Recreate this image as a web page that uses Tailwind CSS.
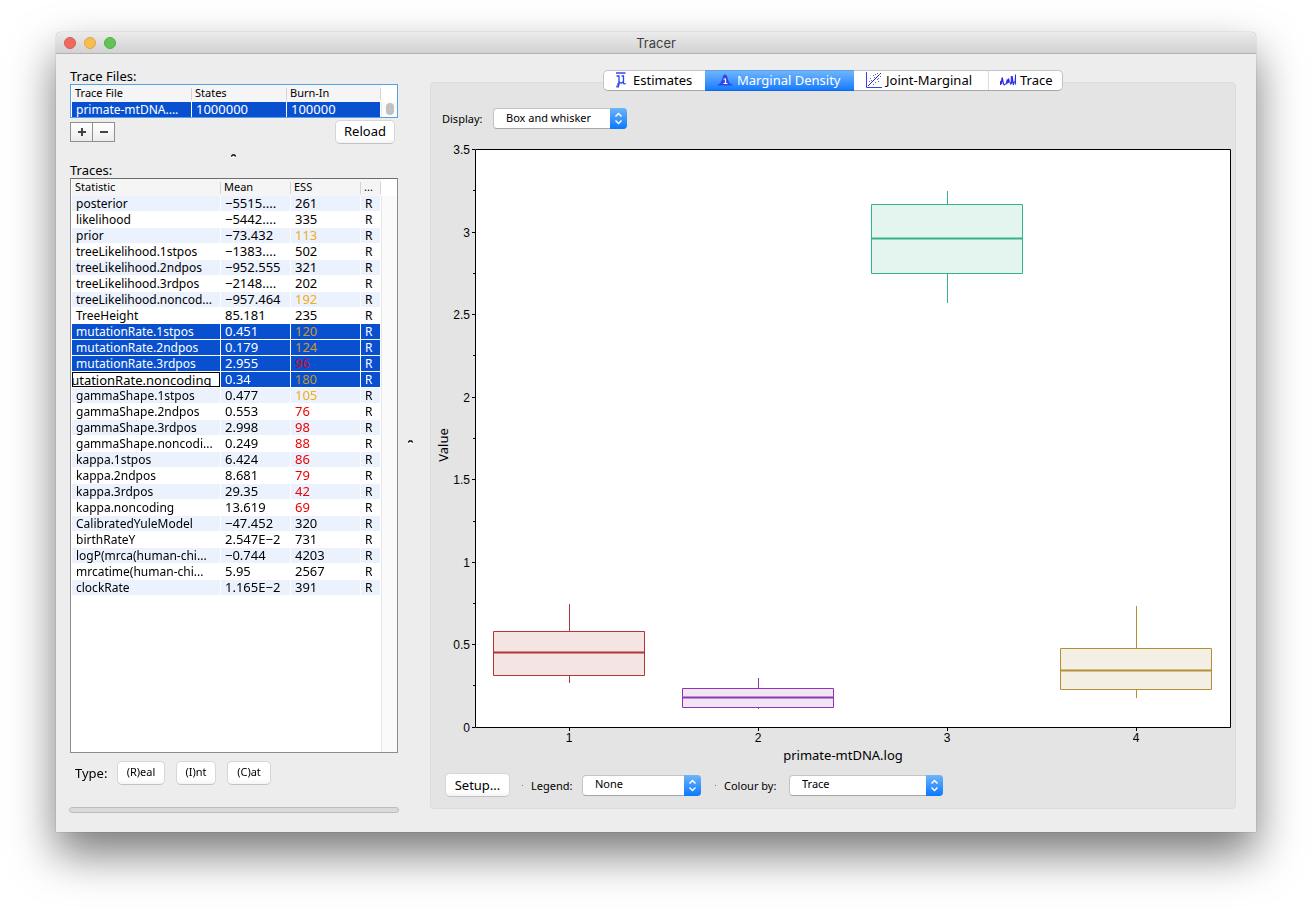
<!DOCTYPE html>
<html lang="en">
<head>
<meta charset="utf-8">
<meta name="viewport" content="width=device-width, initial-scale=1">
<title>Tracer</title>
<script src="https://cdn.jsdelivr.net/npm/@tailwindcss/browser@4"></script>
</head>
<body class="bg-white text-black font-['Lucida_Grande','Noto_Sans',sans-serif] text-[13px] leading-4">
<div class="min-h-screen flex flex-col px-14 pt-8 pb-20">
  <main class="flex-1 flex flex-col bg-[#ededed] rounded-t-[5px] shadow-[0_0_1px_rgba(0,0,0,0.5),0_22px_45px_rgba(0,0,0,0.53)]">
    <header class="relative h-[22px] shrink-0 flex items-center rounded-t-[5px] bg-linear-to-b from-[#ebebeb] to-[#d2d2d2] border-b border-[#b2b2b2] px-2 gap-2">
      <button aria-label="Close" class="size-3 rounded-full bg-[#ee6a5f] border border-[#d85a50]"></button>
      <button aria-label="Minimize" class="size-3 rounded-full bg-[#f6be50] border border-[#dfa544]"></button>
      <button aria-label="Zoom" class="size-3 rounded-full bg-[#61c454] border border-[#52ad46]"></button>
      <h1 class="absolute inset-x-0 text-center text-[#404040] font-['Inter',sans-serif] pointer-events-none">Tracer</h1>
    </header>

    <div class="flex-1 flex pl-3.5 pr-5">
      <!-- Left column: files and traces -->
      <section class="w-[328px] shrink-0 flex flex-col pt-3.5 pb-[19px]">
        <h2 class="h-4">Trace Files:</h2>
        <div class="h-[34px] flex pl-px bg-white border border-[#56a3e4] overflow-hidden">
          <table class="w-[309px] table-fixed border-separate border-spacing-0">
            <colgroup><col class="w-[120px]"><col class="w-[95px]"><col class="w-[94px]"></colgroup>
            <thead class="text-[11px] bg-[#f5f5f5]">
              <tr class="h-[17px]">
                <th class="p-0 text-left font-normal"><span class="block h-3 leading-[10px] pl-[3px] border-r border-[#d4d4d4]">Trace File</span></th>
                <th class="p-0 text-left font-normal"><span class="block h-3 leading-[10px] pl-[3px] border-r border-[#d4d4d4]">States</span></th>
                <th class="p-0 text-left font-normal"><span class="block h-3 leading-[10px] pl-[3px] border-r border-[#d4d4d4]">Burn-In</span></th>
              </tr>
            </thead>
            <tbody class="text-[12px] bg-[#0850d0] text-white">
              <tr class="h-4">
                <td class="p-0 pl-1 border-r border-b border-white leading-[15px] whitespace-nowrap">primate-mtDNA....</td>
                <td class="p-0 pl-1 border-r border-b border-white leading-[15px] text-[13px]">1000000</td>
                <td class="p-0 pl-1 border-r border-b border-white leading-[15px] text-[13px]">100000</td>
              </tr>
            </tbody>
          </table>
          <div class="w-4 pt-[17px]"><div class="h-4 bg-[#fafafa] border-l border-[#e8e8e8] flex justify-center pt-px"><div class="w-2 h-3 rounded-full bg-[#c1c1c1]"></div></div></div>
        </div>
        <div class="mt-0.5 h-6 flex items-center justify-between pr-[3px]">
          <div class="flex">
            <button aria-label="Add trace file" class="w-[23px] h-5 border border-[#8f8f8f] bg-linear-to-b from-white to-[#ececec] flex items-center justify-center"><svg class="size-2" viewBox="0 0 8 8" stroke="#444" stroke-width="2"><path d="M4 0v8M0 4h8"/></svg></button>
            <button aria-label="Remove trace file" class="w-[23px] -ml-px h-5 border border-[#8f8f8f] bg-linear-to-b from-white to-[#ececec] flex items-center justify-center"><svg class="size-2" viewBox="0 0 8 8" stroke="#444" stroke-width="2"><path d="M0 4h8"/></svg></button>
          </div>
          <button class="w-[60px] h-6 pb-0.5 rounded-[5px] border border-[#d6d6d6] border-b-[#c2c2c2] bg-linear-to-b from-white from-75% to-[#f5f5f5]">Reload</button>
        </div>
        <div class="h-[18px] flex items-center justify-center pt-[5px] pr-0.5"><svg class="w-[5px] h-1" viewBox="0 0 5 4" fill="none"><path d="M0 4h5V2H0z" fill="#fff"/><path d="M.3 2.500L1.500 1h2l1.200 1.500" stroke="#111" stroke-width="1.400"/></svg></div>
        <h2 class="h-4">Traces:</h2>
        <div class="flex-1 flex pl-px bg-white border border-[#8c8c8c] border-t-[#6e6e6e]">
          <div class="w-[309px]">
            <table class="w-full table-fixed border-separate border-spacing-0">
              <colgroup><col class="w-[149px]"><col class="w-[70px]"><col class="w-[70px]"><col class="w-[20px]"></colgroup>
              <thead class="text-[11px] bg-[#f5f5f5]">
                <tr class="h-[17px]">
                  <th class="p-0 text-left font-normal"><span class="block h-3 leading-[10px] pl-[3px] border-r border-[#d4d4d4]">Statistic</span></th>
                  <th class="p-0 text-left font-normal"><span class="block h-3 leading-[10px] pl-[3px] border-r border-[#d4d4d4]">Mean</span></th>
                  <th class="p-0 text-left font-normal"><span class="block h-3 leading-[10px] pl-[3px] border-r border-[#d4d4d4]">ESS</span></th>
                  <th class="p-0 text-left font-normal"><span class="block h-3 leading-[10px] pl-[3px] border-r border-[#d4d4d4]">...</span></th>
                </tr>
              </thead>
              <tbody id="traces" class="text-[12px]"></tbody>
            </table>
          </div>
          <div class="w-4 mt-[17px] bg-[#fafafa] border-l border-[#e6e6e6]"></div>
        </div>
        <div class="mt-2 h-6 flex items-center text-[11px]">
          <span class="w-[47px] pl-[5px] text-[13px]">Type:</span>
          <button class="w-12 h-6 pb-0.5 mr-[11px] rounded-[5px] border border-[#d6d6d6] border-b-[#c2c2c2] bg-linear-to-b from-white from-75% to-[#f5f5f5]">(R)eal</button>
          <button class="w-10 h-6 pb-0.5 mr-[11px] rounded-[5px] border border-[#d6d6d6] border-b-[#c2c2c2] bg-linear-to-b from-white from-75% to-[#f5f5f5]">(I)nt</button>
          <button class="w-11 h-6 pb-0.5 rounded-[5px] border border-[#d6d6d6] border-b-[#c2c2c2] bg-linear-to-b from-white from-75% to-[#f5f5f5]">(C)at</button>
        </div>
        <div role="progressbar" aria-label="Progress" class="mt-[22px] -mx-px h-1.5 rounded-full bg-[#dadada] border border-[#bcbcbc]"></div>
      </section>

      <div class="w-8 shrink-0 flex items-center pl-2.5 pb-0.5"><svg class="w-[5px] h-1" viewBox="0 0 5 4" fill="none"><path d="M0 4h5V2H0z" fill="#fff"/><path d="M.3 2.500L1.500 1h2l1.200 1.500" stroke="#111" stroke-width="1.400"/></svg></div>

      <!-- Right column: tabbed analysis panel -->
      <section class="flex-1 min-w-0 flex flex-col pt-4 pb-[23px]">
        <div role="tablist" class="relative z-10 self-center h-[21px] flex rounded-[5px] bg-white border border-[#c4c4c4] border-b-[#a6a6a6]">
          <button role="tab" class="w-[101px] pl-[11px] flex items-center gap-1.5 pb-0.5">
            <svg class="w-3 h-4" viewBox="0 0 12 16" fill="none" stroke="#2f45ee"><path d="M1 1h9.500" stroke-width="1.500"/><path d="M1.500 4H4v9.500M2 13.500v2" stroke-width="1.300"/><path d="M3.200 11v4.500" stroke-width="1.600"/><path d="M4 9.500c.6 2 3.600 2 4.200 0M6.500 4h2v7c0 1 1 1.200 2.300.5" stroke-width="1.300"/></svg>Estimates</button>
          <button role="tab" aria-selected="true" class="w-[149px] pl-3 -my-px flex items-center gap-1 bg-linear-to-b from-[#6db4fa] to-[#0f7bff] text-white border-y border-t-[#5a9fe5] border-b-[#1565e0] pb-0.5">
            <svg class="w-4 h-3" viewBox="0 0 16 12"><path d="M0 11.500V11c3-.6 4.400-3 5.300-6.500C6 1.500 6.800.5 8 .5s2 1 2.700 4C11.600 8 13 10.400 16 11v.500z" fill="#2f45ee"/><path d="M6.500 5h2v4.500M6.500 9.500h4" stroke="#fff" stroke-width="1.200" fill="none"/></svg>Marginal Density</button>
          <button role="tab" class="w-[134px] pl-3 flex items-center gap-1 pb-0.5">
            <svg class="size-4" viewBox="0 0 16 16" fill="none" stroke="#2f45ee"><path d="M.5 0v15.500H16"/><path d="M2 14L15 1" stroke="#2222c8"/><g fill="#5560ee" stroke="none"><path d="M4 6h1v1H4zM7 3h1v1H7zM5 8h1v1H5zM9 2h1v1H9zM11 1h1v1h-1zM8 5h1v1H8zM3 9h1v1H3zM12 6h1v1h-1zM14 4h1v1h-1zM9 10h1v1H9zM7 12h1v1H7zM12 9h1v1h-1zM11 7h1v1h-1zM13 2h1v1h-1z"/></g></svg>Joint-Marginal</button>
          <button role="tab" class="w-[74px] pl-[11px] border-l border-[#dcdcdc] flex items-center gap-1 pb-0.5">
            <svg class="w-4 h-3" viewBox="0 0 16 12" fill="none" stroke="#2a2ae6" stroke-width="1.100"><path d="M.6 11V7l1 3 .6-6.500.6 2.500.8 4 .8 1 .9-1 .9 0 .8-3.500.7 2 .8-4 .8 3 .8 1 .6 1.500 1-1 .5-7 .6 5 .5 4 .9-3 .9 0 .5-7.500v10"/><path d="M2 7.500v-3M8.300 9V5M11.300 9V2" /></svg>Trace</button>
        </div>

        <div role="tabpanel" class="flex-1 -mt-[9px] flex flex-col rounded-[4px] bg-[#e4e4e4] border border-[#dcdcdc] text-[11px]">
          <div class="pt-[25px] pl-[11px] flex items-center">
            <label for="display" class="w-[51px]">Display:</label>
            <div class="relative">
              <select id="display" class="block appearance-none w-[134px] h-[21px] pl-3 pb-0.5 rounded-[4px] bg-white border border-[#c4c4c4] border-b-[#a6a6a6]"><option>Box and whisker</option></select>
              <svg class="absolute right-0 top-0 pointer-events-none w-[17px] h-[21px]" viewBox="0 0 17 21"><defs><linearGradient id="blue" x2="0" y2="1"><stop stop-color="#6db4fa"/><stop offset="1" stop-color="#0a78ff"/></linearGradient></defs><path d="M0 0h13a4 4 0 014 4v13a4 4 0 01-4 4H0z" fill="url(#blue)"/><path d="M5.500 8.500l3-3 3 3M5.500 12.500l3 3 3-3" fill="none" stroke="#fff" stroke-width="1.500"/></svg>
            </div>
          </div>

          <svg class="mt-[11px] -mx-px block" viewBox="0 0 806 626" role="img" aria-label="Box and whisker plot of mutation rates">
            <path d="M45.500 9.500h755v578h-755z" fill="#fff" stroke="#000"/>
            <path d="M42 9.500h3M42 92.500h3M42 174.500h3M42 257.500h3M42 339.500h3M42 422.500h3M42 504.500h3M42 587.500h3M43 50.500h2M43 133.500h2M43 215.500h2M43 298.500h2M43 381.500h2M43 463.500h2M43 545.500h2M139.500 588v3M328.500 588v3M517.500 588v3M706.500 588v3" stroke="#000"/>
            <g class="font-['Liberation_Sans',sans-serif] text-[12px]" text-anchor="end">
              <text x="40" y="14">3.5</text><text x="40" y="97">3</text><text x="40" y="179">2.5</text><text x="40" y="262">2</text><text x="40" y="344">1.5</text><text x="40" y="427">1</text><text x="40" y="509">0.5</text><text x="40" y="592">0</text>
            </g>
            <g class="font-['Liberation_Sans',sans-serif] text-[12px]" text-anchor="middle">
              <text x="139" y="602">1</text><text x="328" y="602">2</text><text x="517" y="602">3</text><text x="706" y="602">4</text>
            </g>
            <g class="text-[13px]" text-anchor="middle">
              <text x="413" y="620">primate-mtDNA.log</text>
              <text transform="translate(18 305) rotate(-90)">Value</text>
            </g>
            <g stroke="#b23636"><path d="M139.500 464v79"/><path d="M63.500 491.500h151v44h-151z" fill="#f4e5e4"/><path d="M64 512.500h150" stroke-width="3" stroke-opacity=".5"/><path d="M64 512.500h150"/></g>
            <g stroke="#8f35b3"><path d="M328.500 538v31"/><path d="M252.500 548.500h151v19h-151z" fill="#f0e4f5"/><path d="M253 557.500h150" stroke-width="3" stroke-opacity=".5"/><path d="M253 557.500h150"/></g>
            <g stroke="#35b388"><path d="M517.500 51v112"/><path d="M441.500 64.500h151v69h-151z" fill="#e4f4ee"/><path d="M442 98.500h150" stroke-width="3" stroke-opacity=".5"/><path d="M442 98.500h150"/></g>
            <g stroke="#b38f35"><path d="M706.500 466v92"/><path d="M630.500 508.500h151v41h-151z" fill="#f4efe4"/><path d="M631 530.500h150" stroke-width="3" stroke-opacity=".5"/><path d="M631 530.500h150"/></g>
          </svg>

          <div class="mt-[7px] pl-3.5 flex items-center">
            <button class="w-[65px] h-6 rounded-[5px] border border-[#d6d6d6] border-b-[#c2c2c2] bg-linear-to-b from-white from-75% to-[#f5f5f5] text-[13px]">Setup...</button>
            <span class="ml-3 mr-2 size-px bg-[#777]"></span>
            <label for="legend" class="w-[51px] pt-0.5">Legend:</label>
            <div class="relative">
              <select id="legend" class="block appearance-none w-[119px] h-[21px] pl-3 pb-0.5 rounded-[4px] bg-white border border-[#c4c4c4] border-b-[#a6a6a6]"><option>None</option></select>
              <svg class="absolute right-0 top-0 pointer-events-none w-[17px] h-[21px]" viewBox="0 0 17 21"><path d="M0 0h13a4 4 0 014 4v13a4 4 0 01-4 4H0z" fill="url(#blue)"/><path d="M5.500 8.500l3-3 3 3M5.500 12.500l3 3 3-3" fill="none" stroke="#fff" stroke-width="1.500"/></svg>
            </div>
            <span class="ml-3.5 mr-2 size-px bg-[#777]"></span>
            <label for="colour" class="w-[65px] pt-0.5">Colour by:</label>
            <div class="relative">
              <select id="colour" class="block appearance-none w-[154px] h-[21px] pl-3 pb-0.5 rounded-[4px] bg-white border border-[#c4c4c4] border-b-[#a6a6a6]"><option>Trace</option></select>
              <svg class="absolute right-0 top-0 pointer-events-none w-[17px] h-[21px]" viewBox="0 0 17 21"><path d="M0 0h13a4 4 0 014 4v13a4 4 0 01-4 4H0z" fill="url(#blue)"/><path d="M5.500 8.500l3-3 3 3M5.500 12.500l3 3 3-3" fill="none" stroke="#fff" stroke-width="1.500"/></svg>
            </div>
          </div>
        </div>
      </section>
    </div>
  </main>
</div>
<script>
const rows = [
  ['posterior','−5515....','261'],['likelihood','−5442....','335'],['prior','−73.432','113'],
  ['treeLikelihood.1stpos','−1383....','502'],['treeLikelihood.2ndpos','−952.555','321'],['treeLikelihood.3rdpos','−2148....','202'],
  ['treeLikelihood.noncod...','−957.464','192'],['TreeHeight','85.181','235'],['mutationRate.1stpos','0.451','120'],
  ['mutationRate.2ndpos','0.179','124'],['mutationRate.3rdpos','2.955','96'],['mutationRate.noncoding','0.34','180'],
  ['gammaShape.1stpos','0.477','105'],['gammaShape.2ndpos','0.553','76'],['gammaShape.3rdpos','2.998','98'],
  ['gammaShape.noncodi...','0.249','88'],['kappa.1stpos','6.424','86'],['kappa.2ndpos','8.681','79'],
  ['kappa.3rdpos','29.35','42'],['kappa.noncoding','13.619','69'],['CalibratedYuleModel','−47.452','320'],
  ['birthRateY','2.547E−2','731'],['logP(mrca(human-chi...','−0.744','4203'],['mrcatime(human-chi...','5.95','2567'],['clockRate','1.165E−2','391']
];
const cell = 'p-0 pl-1 border-r border-b border-white leading-[15px] whitespace-nowrap';
document.getElementById('traces').innerHTML = rows.map(([name, mean, ess], i) => {
  const selected = i >= 8 && i <= 11;
  const row = selected ? 'h-4 bg-[#0850d0] text-white' : i % 2 ? 'h-4 bg-white' : 'h-4 bg-[#ebf2fe]';
  const tone = +ess < 100 ? (selected ? 'text-[#d00a20]' : 'text-[#f00000]') : +ess < 200 ? (selected ? 'text-[#c89a30]' : 'text-[#f2ac14]') : '';
  const first = i === 11
    ? `<td class="p-0 border-r border-b border-white"><input id="editor" aria-label="Statistic name" value="${name}" class="block w-full h-[15px] pr-2 bg-white text-black text-[13px] leading-[13px] border border-black outline-none caret-transparent"></td>`
    : `<td class="${cell}">${name}</td>`;
  return `<tr class="${row}">${first}<td class="${cell} text-[13px]">${mean}</td><td class="${cell} text-[13px] ${tone}">${ess}</td><td class="${cell}">R</td></tr>`;
}).join('');
// The cell being edited shows the end of its text.
const editor = document.getElementById('editor');
const showEnd = () => {
  editor.focus({ preventScroll: true });
  editor.setSelectionRange(editor.value.length, editor.value.length);
  editor.scrollLeft = editor.scrollWidth;
};
showEnd();
window.addEventListener('load', showEnd);
</script>
</body>
</html>
